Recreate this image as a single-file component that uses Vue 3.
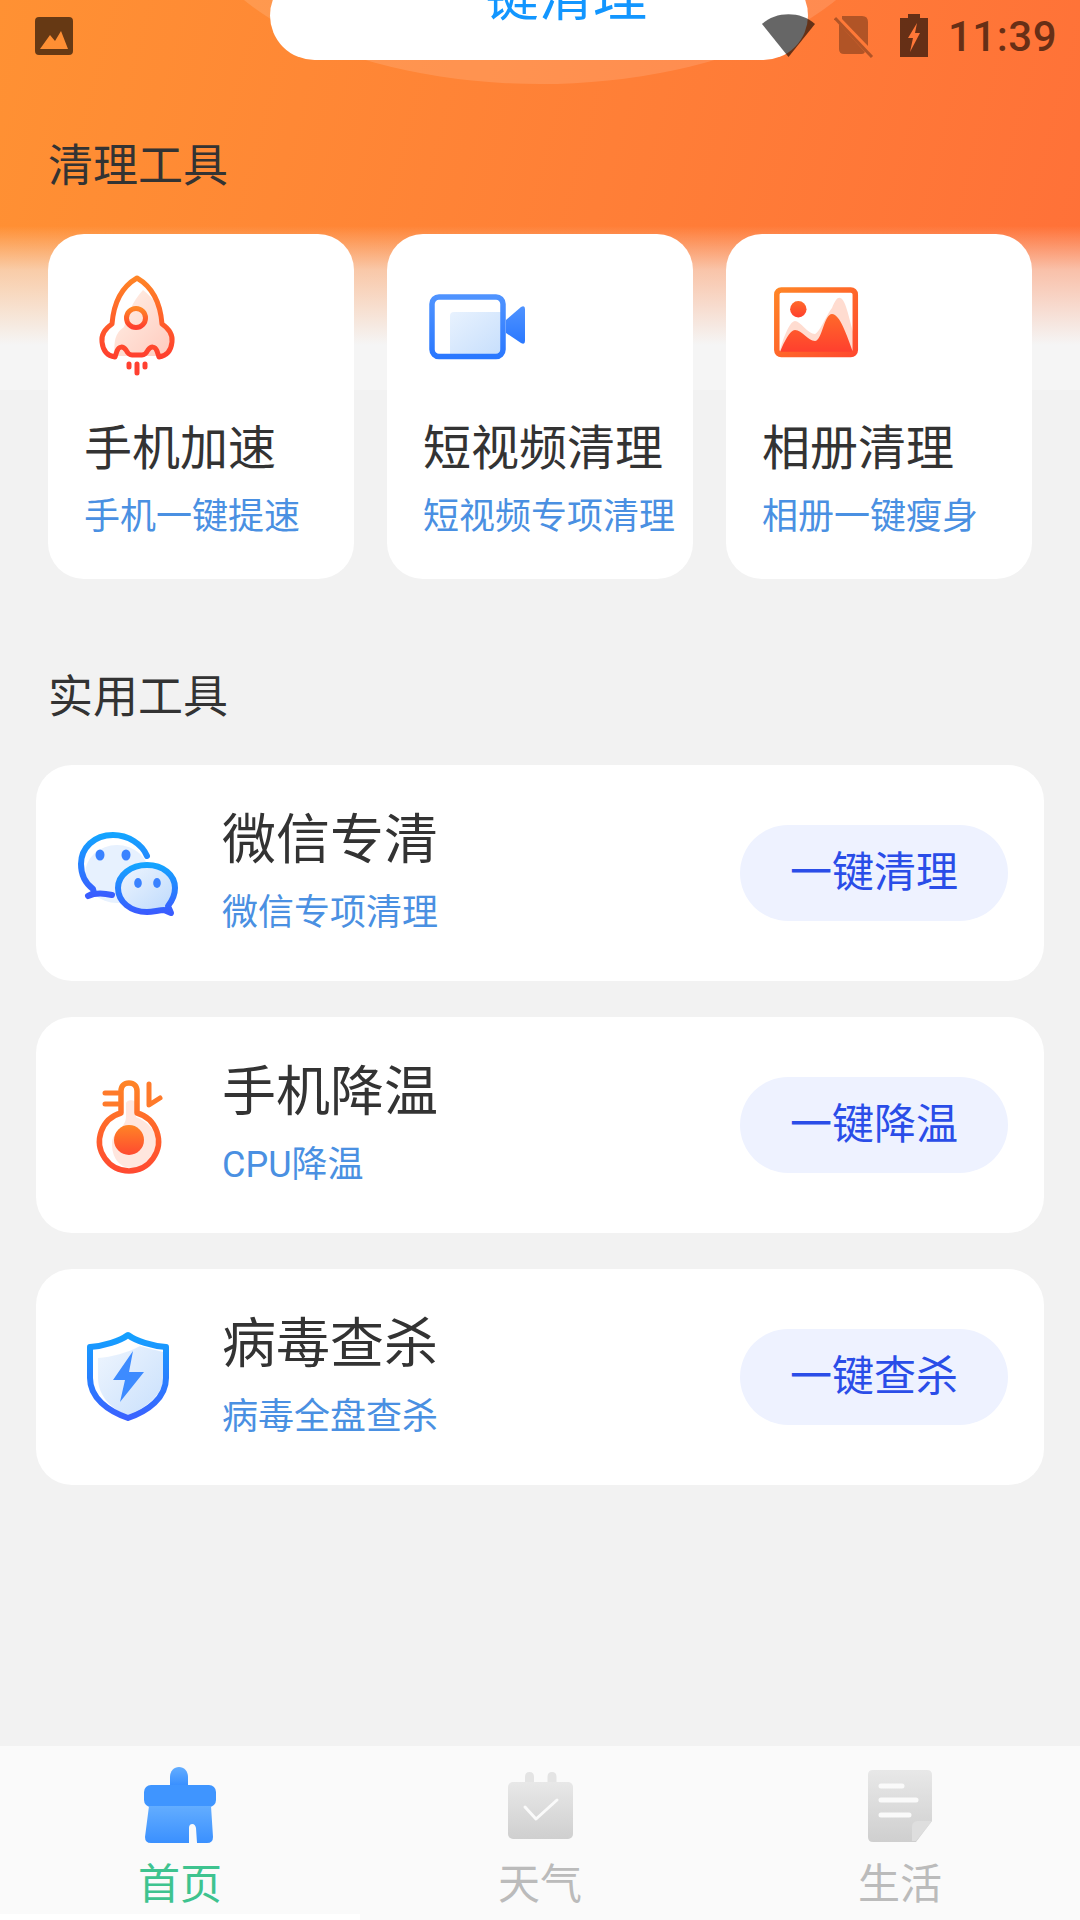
<template>
  <div class="page">
    <div class="header-bg"></div>
    <div class="glow"></div>
    <div class="top-pill">一键清理</div>

    <div class="status-bar">
      <svg class="st-image" width="38" height="38" viewBox="0 0 38 38">
        <path fill-rule="evenodd" d="M4 0H34Q38 0 38 4V34Q38 38 34 38H4Q0 38 0 34V4Q0 0 4 0ZM5 32H33L26 14L20 24L15 18Z" />
      </svg>
      <div class="st-right">
        <svg width="53" height="43" viewBox="0 0 53 43">
          <path d="M0 10C14 -3 39 -3 53 10L26.500 43Z" />
        </svg>
        <svg class="st-sim" width="40" height="42" viewBox="0 0 40 42">
          <path d="M8 0H28Q34 0 34 6V30L8 3ZM5 8L31 36Q30 38 28 38H10Q5 38 5 33Z" />
          <path d="M1 2L38 41" stroke="#000" stroke-width="3" />
        </svg>
        <svg width="28" height="43" viewBox="0 0 28 43">
          <path fill-rule="evenodd" d="M8 0H20V4H28V43H0V4H8ZM17 9L8 24H13L10 38L20 19H15Z" />
        </svg>
        <span class="st-time">11:39</span>
      </div>
    </div>

    <main class="content">
      <h2 class="section-title">清理工具</h2>
      <div class="cards">
        <div v-for="card in cards" :key="card.title" class="card">
          <svg v-if="card.icon === 'rocket'" class="card-icon" viewBox="0 0 120 110">
            <defs>
              <linearGradient id="warm" x1="0" y1="0" x2="0" y2="1">
                <stop offset="0" stop-color="#ff8426" />
                <stop offset="1" stop-color="#ff3f2e" />
              </linearGradient>
              <linearGradient id="warmPale" x1="0" y1="0" x2="1" y2="1">
                <stop offset="0" stop-color="#fff1e8" />
                <stop offset="1" stop-color="#ffcabd" />
              </linearGradient>
            </defs>
            <path fill="url(#warmPale)" d="M59 16C48 28 44 40 40 53C33 58 29 64 31 82H75C82 82 87 77 88 68C89 60 84 54 78 50C77 36 70 24 59 16Z" />
            <path fill="none" stroke="url(#warm)" stroke-width="5" stroke-linejoin="round" d="M53 4C65 11 76 24 78 50C84 54 89 60 88 68C87 77 82 82 75 83L73 77C71 72 67 72 64 76C62 80 60 81 58 81H48C46 81 44 80 42 76C39 72 35 72 33 77L31 83C24 82 19 77 18 68C17 60 22 54 28 50C30 24 41 11 53 4Z" />
            <circle cx="52" cy="44" r="9.500" fill="none" stroke="url(#warm)" stroke-width="5" />
            <path fill="none" stroke="#ff4030" stroke-width="5" stroke-linecap="round" d="M45 90V93M53 90V99M61 90V93" />
          </svg>

          <svg v-else-if="card.icon === 'video'" class="card-icon" viewBox="0 0 120 110">
            <defs>
              <linearGradient id="videoBlue" x1="0" y1="0" x2="0" y2="1">
                <stop offset="0" stop-color="#4f93ff" />
                <stop offset="1" stop-color="#2a78ff" />
              </linearGradient>
              <linearGradient id="videoPale" x1="0" y1="0" x2="1" y2="1">
                <stop offset="0" stop-color="#e8f2fe" />
                <stop offset="1" stop-color="#c6defc" />
              </linearGradient>
            </defs>
            <path fill="url(#videoPale)" d="M31 38H80V81H27V42Q27 38 31 38Z" />
            <rect x="9" y="23" width="71" height="59.500" rx="7" fill="none" stroke="url(#videoBlue)" stroke-width="5.500" />
            <path fill="url(#videoBlue)" d="M83 46L98 33Q102 31 102 35V67Q102 71 98 69L83 59Z" />
          </svg>

          <svg v-else class="card-icon" viewBox="0 0 120 110">
            <defs>
              <linearGradient id="photoWarm" x1="0" y1="0" x2="1" y2="1">
                <stop offset="0" stop-color="#ff8426" />
                <stop offset="1" stop-color="#ff4a2e" />
              </linearGradient>
              <linearGradient id="hill" x1="0" y1="0" x2="0" y2="1">
                <stop offset="0" stop-color="#ff6a2a" />
                <stop offset="1" stop-color="#ff3f2e" />
              </linearGradient>
            </defs>
            <path fill="#ffdcd0" d="M18 76C22 62 28 47 33 47C38 47 46 60 53 60C58 58 66 38 70 34C73 26 76 23 78 24C84 24 88 50 92 60V78H18Z" />
            <path fill="url(#hill)" d="M18 78C22 68 28 56 33 56C40 56 46 67 53 67C60 67 62 40 70 40C78 40 85 62 91 78Z" />
            <circle cx="36.300" cy="35.300" r="8.200" fill="url(#hill)" />
            <rect x="14.800" y="16" width="78.500" height="64.500" rx="4.500" fill="none" stroke="url(#photoWarm)" stroke-width="5.500" />
          </svg>

          <div class="card-title">{{ card.title }}</div>
          <div class="card-sub">{{ card.sub }}</div>
        </div>
      </div>

      <h2 class="section-title second">实用工具</h2>
      <div class="rows">
        <div v-for="row in rows" :key="row.title" class="row">
          <svg v-if="row.icon === 'wechat'" class="row-icon" viewBox="0 0 120 110">
            <defs>
              <linearGradient id="coolLine" x1="0" y1="0" x2="0" y2="1">
                <stop offset="0" stop-color="#14a4ff" />
                <stop offset="1" stop-color="#3a5cff" />
              </linearGradient>
              <linearGradient id="coolPale" x1="0" y1="0" x2="1" y2="1">
                <stop offset="0" stop-color="#f0f6fe" />
                <stop offset="1" stop-color="#bcd9fc" />
              </linearGradient>
            </defs>
            <ellipse cx="45" cy="56" rx="32" ry="29" fill="#e7f1fe" />
            <path fill="none" stroke="url(#coolLine)" stroke-width="6" stroke-linecap="round" stroke-linejoin="round" d="M75 38C70 26 56 17 41 17C22 17 9 30 9 46C9 56 13 65 21 71L22 75L16 78C24 74 32 75 40 77" />
            <path fill="url(#coolPale)" stroke="url(#coolLine)" stroke-width="6" stroke-linejoin="round" d="M75 47C59 47 46 57 46 70C46 84 59 94 75 94C81 94 87 92 92 92L99 95L96 88C100 83 103 77 103 70C103 57 91 47 75 47Z" />
            <ellipse cx="28" cy="37" rx="4.500" ry="5.500" fill="#3a82ff" />
            <ellipse cx="54" cy="37" rx="4.500" ry="5.500" fill="#3a82ff" />
            <ellipse cx="66" cy="65" rx="3.800" ry="5" fill="#3a82ff" />
            <ellipse cx="85" cy="65" rx="3.800" ry="5" fill="#3a82ff" />
          </svg>

          <svg v-else-if="row.icon === 'thermo'" class="row-icon" viewBox="0 0 120 110">
            <defs>
              <linearGradient id="thermoLine" x1="0" y1="0" x2="0" y2="1">
                <stop offset="0" stop-color="#ff8426" />
                <stop offset="1" stop-color="#ff4a30" />
              </linearGradient>
            </defs>
            <path fill="#ffe6de" d="M54 34C54 29 64 29 64 34V47C76 52 84 60 84 72C84 88 72 98 60 98C46 98 40 86 40 74C40 60 54 60 54 46Z" />
            <path fill="none" stroke="url(#thermoLine)" stroke-width="5.500" stroke-linejoin="round" d="M49 43V21C49 16 52 13 57 13C62 13 65 16 65 21V43A29.500 29.500 0 1 1 49 43Z" />
            <circle cx="57" cy="70" r="15" fill="url(#thermoLine)" />
            <path fill="none" stroke="#ff7a2a" stroke-width="5" stroke-linecap="round" stroke-linejoin="round" d="M33 23H46M33 34H46M77 14V35L88 28" />
          </svg>

          <svg v-else class="row-icon" viewBox="0 0 120 110">
            <defs>
              <linearGradient id="shieldLine" x1="0" y1="0" x2="0" y2="1">
                <stop offset="0" stop-color="#14a0ff" />
                <stop offset="1" stop-color="#3a62ff" />
              </linearGradient>
              <linearGradient id="shieldPale" x1="0" y1="0" x2="1" y2="1">
                <stop offset="0" stop-color="#eef5fe" />
                <stop offset="1" stop-color="#c9e0fc" />
              </linearGradient>
            </defs>
            <path fill="url(#shieldPale)" d="M26 36C40 35 55 31 68 24L91 30V56C91 73 74 86 56 93C40 88 26 74 26 56Z" />
            <path fill="none" stroke="url(#shieldLine)" stroke-width="6" stroke-linejoin="round" d="M56 13C48 19 32 24 18 25V56C18 76 36 89 56 96C76 89 94 76 94 56V25C80 24 64 19 56 13Z" />
            <path fill="#3d8bff" d="M61 29L41 58H53L48 80L72 50H57Z" />
          </svg>

          <div class="row-text">
            <div class="row-title">{{ row.title }}</div>
            <div class="row-sub">{{ row.sub }}</div>
          </div>
          <button class="row-btn">{{ row.action }}</button>
        </div>
      </div>
    </main>

    <nav class="tabbar">
      <div class="tab active">
        <svg class="tab-icon" viewBox="0 0 80 80">
          <defs>
            <linearGradient id="brush" x1="0" y1="0" x2="0" y2="1">
              <stop offset="0" stop-color="#63adff" />
              <stop offset="1" stop-color="#3a90ff" />
            </linearGradient>
          </defs>
          <path fill="url(#brush)" d="M30 20V12C30 6 34 2 39 2C44 2 48 6 48 12V20Z" />
          <rect x="4" y="20" width="72" height="22" rx="7" fill="#3f95ff" />
          <path fill="url(#brush)" d="M9 41H71L73 72Q73 78 67 78H57L56 63Q55 59 52.500 59Q49 59 49 63V78H11Q5 78 5 72Z" />
        </svg>
        <span>首页</span>
      </div>
      <div class="tab">
        <svg class="tab-icon" viewBox="0 0 80 80">
          <defs>
            <linearGradient id="grey" x1="0" y1="0" x2="0" y2="1">
              <stop offset="0" stop-color="#e8e8e8" />
              <stop offset="1" stop-color="#cfcfcf" />
            </linearGradient>
          </defs>
          <path fill="#e4e4e4" d="M25 17V12Q25 7 29.500 7Q34 7 34 12V17ZM47.500 17V12Q47.500 7 52 7Q56.500 7 56.500 12V17Z" />
          <rect x="8" y="17" width="65" height="57" rx="5" fill="url(#grey)" />
          <path fill="none" stroke="#fafafa" stroke-width="3" stroke-linecap="round" stroke-linejoin="round" d="M25 42L36 54L57 35" />
        </svg>
        <span>天气</span>
      </div>
      <div class="tab">
        <svg class="tab-icon" viewBox="0 0 80 80">
          <path fill="url(#grey)" d="M13 5H67Q72 5 72 10V56L56 77H13Q8 77 8 72V10Q8 5 13 5Z" />
          <path fill="#dedede" d="M72 56H58Q52 56 52 62V76H56Z" />
          <path fill="none" stroke="#fafafa" stroke-width="5" stroke-linecap="round" d="M21 21H42M21 35H56M21 50H49" />
        </svg>
        <span>生活</span>
      </div>
      <div class="tab-strip"></div>
    </nav>
  </div>
</template>

<script setup>
const cards = [
  { icon: 'rocket', title: '手机加速', sub: '手机一键提速' },
  { icon: 'video', title: '短视频清理', sub: '短视频专项清理' },
  { icon: 'photo', title: '相册清理', sub: '相册一键瘦身' },
]

const rows = [
  { icon: 'wechat', title: '微信专清', sub: '微信专项清理', action: '一键清理' },
  { icon: 'thermo', title: '手机降温', sub: 'CPU降温', action: '一键降温' },
  { icon: 'shield', title: '病毒查杀', sub: '病毒全盘查杀', action: '一键查杀' },
]
</script>

<style>
html,
body {
  margin: 0;
  background: #f2f2f2;
}
</style>

<style scoped>
.page {
  position: relative;
  width: 1080px;
  height: 1920px;
  overflow: hidden;
  display: flex;
  flex-direction: column;
  background: #f2f2f2;
  font-family: Roboto, "Noto Sans CJK SC", sans-serif;
  color: #333;
}

.header-bg {
  position: absolute;
  top: 0;
  left: 0;
  width: 1080px;
  height: 390px;
  background:
    linear-gradient(to bottom, rgba(245, 245, 245, 0) 226px, rgba(245, 245, 245, 0.6) 270px, #f5f5f5 345px),
    linear-gradient(105deg, #ff9133 0%, #ff7f37 55%, #ff7038 100%);
}

.glow {
  position: absolute;
  top: -276px;
  left: 190px;
  width: 700px;
  height: 360px;
  border-radius: 50%;
  background: rgba(255, 255, 255, 0.13);
}

.top-pill {
  position: absolute;
  top: -29px;
  left: 270px;
  width: 538px;
  height: 89px;
  border-radius: 50px;
  background: #fff;
  text-align: center;
  font-size: 54px;
  line-height: 54px;
  color: #1296ff;
}

.status-bar {
  position: absolute;
  top: 14px;
  left: 35px;
  width: 1022px;
  display: flex;
  justify-content: space-between;
  align-items: flex-start;
}

.status-bar svg {
  display: block;
  fill: rgba(0, 0, 0, 0.6);
}

.st-image {
  margin-top: 3px;
}

.st-right {
  display: flex;
  align-items: flex-start;
  gap: 19px;
}

.status-bar .st-sim {
  margin-top: 2px;
  margin-right: 7px;
  opacity: 0.3;
  fill: #000;
}

.st-time {
  margin-left: 1px;
  font-size: 42px;
  font-weight: 500;
  line-height: 46px;
  letter-spacing: 0.5px;
  color: rgba(0, 0, 0, 0.6);
}

.content {
  position: relative;
  padding-top: 137px;
}

.section-title {
  margin: 0 0 37px 48px;
  font-size: 45px;
  font-weight: 400;
  line-height: 60px;
  color: #333;
}

.second {
  margin-top: 89px;
  margin-bottom: 37px;
}

.cards {
  display: flex;
  gap: 33px;
  padding-left: 48px;
}

.card {
  width: 306px;
  height: 345px;
  box-sizing: border-box;
  padding: 40px 0 0 36px;
  border-radius: 36px;
  background: #fff;
}

.card-icon {
  display: block;
  width: 120px;
  height: 110px;
}

.card-title {
  margin-top: 35px;
  font-size: 48px;
  line-height: 60px;
  white-space: nowrap;
}

.card-sub {
  margin-top: 16px;
  font-size: 36px;
  line-height: 44px;
  white-space: nowrap;
  color: #4a90e2;
}

.rows {
  display: flex;
  flex-direction: column;
  gap: 36px;
  padding: 0 36px;
}

.row {
  height: 216px;
  display: flex;
  align-items: center;
  padding: 0 36px;
  border-radius: 36px;
  background: #fff;
}

.row-icon {
  width: 120px;
  height: 110px;
  flex-shrink: 0;
}

.row-text {
  flex: 1;
  margin-left: 30px;
}

.row-title {
  font-size: 54px;
  line-height: 60px;
}

.row-sub {
  margin-top: 20px;
  font-size: 36px;
  line-height: 44px;
  color: #4a90e2;
}

.row-btn {
  width: 268px;
  height: 96px;
  padding: 0 0 10px;
  border: none;
  border-radius: 48px;
  background: #eef2ff;
  font-family: inherit;
  font-size: 42px;
  color: #2a4de8;
}

.tabbar {
  position: relative;
  margin-top: auto;
  height: 174px;
  display: flex;
  background: #fafafa;
}

.tab {
  flex: 1;
  display: flex;
  flex-direction: column;
  align-items: center;
  padding-top: 19px;
  font-size: 42px;
  line-height: 52px;
  color: #bbb;
}

.tab.active {
  color: #3ec38f;
}

.tab-icon {
  display: block;
  width: 80px;
  height: 80px;
  margin-bottom: 14px;
}

.tab-strip {
  position: absolute;
  left: 0;
  bottom: 0;
  width: 360px;
  height: 6px;
  background: #fff;
}
</style>
